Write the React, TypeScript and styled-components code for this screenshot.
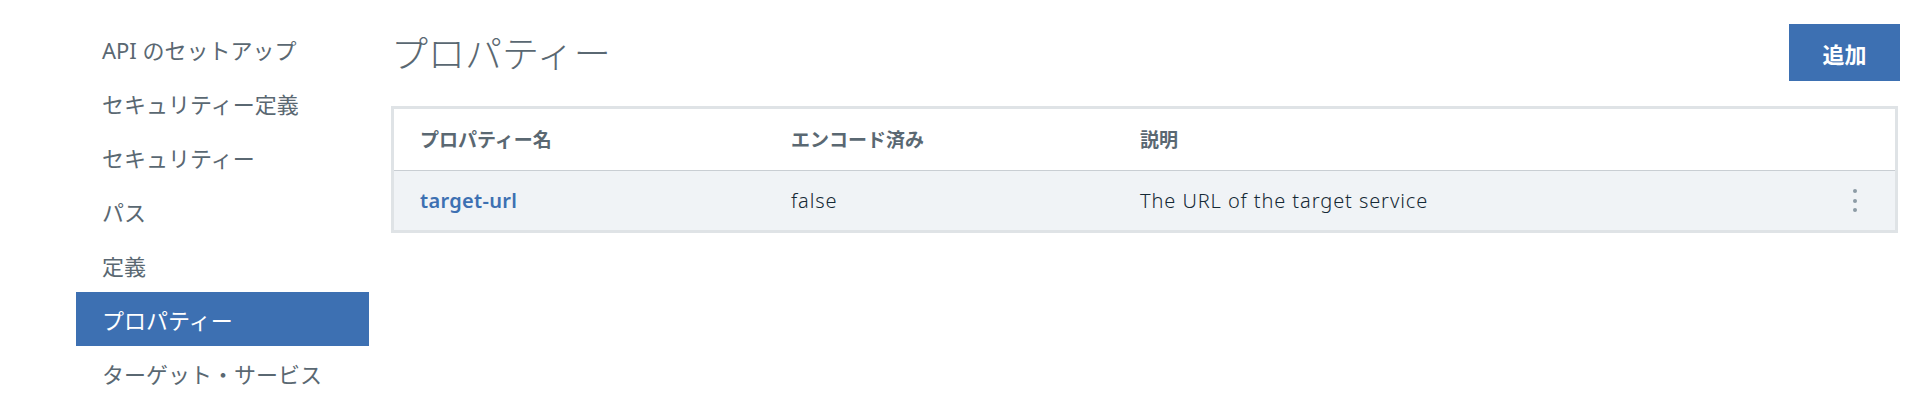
import React from "react";
import styled, { createGlobalStyle } from "styled-components";

const Global = createGlobalStyle`
  html, body { margin: 0; padding: 0; background: #ffffff; }
  body {
    font-family: "Noto Sans", "Noto Sans CJK JP", sans-serif;
    color: #152935;
  }
  * { box-sizing: border-box; }
`;

const Page = styled.div`
  display: flex;
  align-items: flex-start;
  padding: 0 18px 0 76px;
  gap: 22px;
  height: 400px;
  overflow: hidden;
`;

const Sidebar = styled.nav`
  width: 293px;
  flex: none;
  padding-top: 22px;
  display: flex;
  flex-direction: column;
`;

const NavItem = styled.a<{ $active?: boolean }>`
  display: flex;
  align-items: center;
  height: 54px;
  padding-left: 26px;
  font-size: 22px;
  font-weight: 400;
  color: ${(p) => (p.$active ? "#ffffff" : "#5a6872")};
  background: ${(p) => (p.$active ? "#3d70b2" : "transparent")};
  text-decoration: none;
  white-space: nowrap;
`;

const Main = styled.main`
  flex: 1;
  display: flex;
  flex-direction: column;
  padding-top: 24px;
`;

const TitleRow = styled.div`
  display: flex;
  align-items: center;
  justify-content: space-between;
  height: 57px;
  margin-bottom: 25px;
`;

const Title = styled.h1`
  margin: 0;
  font-size: 37px;
  font-weight: 300;
  color: #5a6872;
  line-height: 1;
  position: relative;
  top: 1px;
`;

const AddButton = styled.button`
  width: 111px;
  height: 57px;
  border: none;
  margin-right: -2px;
  background: #3d70b2;
  color: #ffffff;
  font-family: inherit;
  font-size: 22px;
  font-weight: 600;
  cursor: pointer;
`;

const TableBox = styled.div`
  border: 3px solid #dfe3e6;
`;

const Table = styled.table`
  width: 100%;
  border-collapse: collapse;
  table-layout: fixed;
`;

const HeadCell = styled.th<{ $w?: number }>`
  width: ${(p) => (p.$w ? `${p.$w}px` : "auto")};
  height: 61px;
  padding: 0 0 0 26px;
  text-align: left;
  font-size: 19px;
  font-weight: 600;
  color: #5a6872;
  background: #ffffff;
  border-bottom: 1px solid #c9ced3;
`;

const Row = styled.tr`
  background: #f0f3f6;
`;

const Cell = styled.td`
  height: 60px;
  padding: 0 0 0 26px;
  font-size: 20px;
  font-weight: 300;
  letter-spacing: 0.9px;
  color: #152935;
  white-space: nowrap;
`;

const LinkText = styled.a`
  color: #3d70b2;
  font-weight: 600;
  letter-spacing: 0.3px;
  text-decoration: none;
`;

const MenuCell = styled.td`
  width: 60px;
  padding: 0;
  text-align: center;
`;

const Kebab = styled.span`
  display: inline-flex;
  flex-direction: column;
  gap: 5.5px;
  vertical-align: middle;
  margin-left: -21px;
  & > i {
    display: block;
    width: 4px;
    height: 4px;
    border-radius: 50%;
    background: #8c9ba5;
  }
`;

const navItems = [
  "API のセットアップ",
  "セキュリティー定義",
  "セキュリティー",
  "パス",
  "定義",
  "プロパティー",
  "ターゲット・サービス",
];

export default function App() {
  return (
    <>
      <Global />
      <Page>
        <Sidebar>
          {navItems.map((n) => (
            <NavItem key={n} $active={n === "プロパティー"}>
              {n}
            </NavItem>
          ))}
        </Sidebar>
        <Main>
          <TitleRow>
            <Title>プロパティー</Title>
            <AddButton>追加</AddButton>
          </TitleRow>
          <TableBox>
            <Table>
              <thead>
                <tr>
                  <HeadCell $w={371}>プロパティー名</HeadCell>
                  <HeadCell $w={349}>エンコード済み</HeadCell>
                  <HeadCell>説明</HeadCell>
                  <HeadCell $w={60} />
                </tr>
              </thead>
              <tbody>
                <Row>
                  <Cell>
                    <LinkText>target-url</LinkText>
                  </Cell>
                  <Cell>false</Cell>
                  <Cell>The URL of the target service</Cell>
                  <MenuCell>
                    <Kebab>
                      <i />
                      <i />
                      <i />
                    </Kebab>
                  </MenuCell>
                </Row>
              </tbody>
            </Table>
          </TableBox>
        </Main>
      </Page>
    </>
  );
}
